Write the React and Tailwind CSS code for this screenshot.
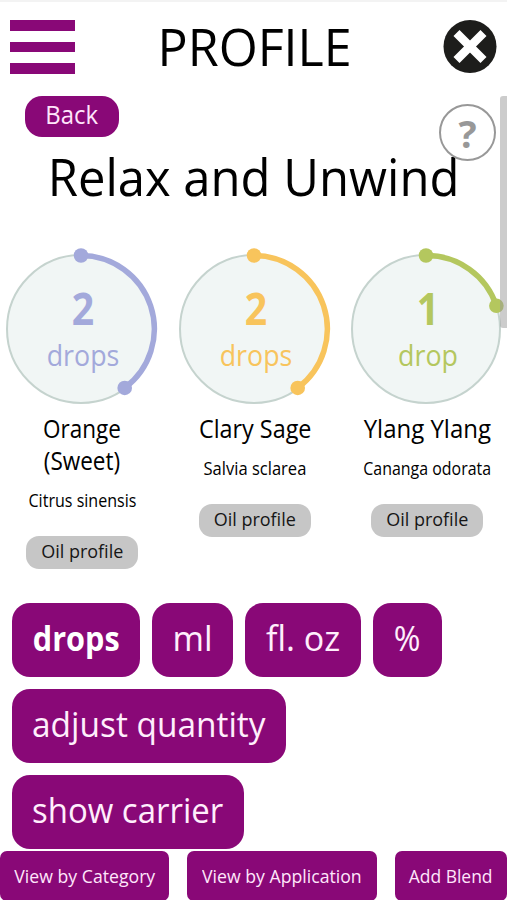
import React, { useState } from "react";

const oils = [
  {
    name: "Orange (Sweet)",
    latin: "Citrus sinensis",
    amount: 2,
    color: "#a3a9db",
    nameStyle: "w-[100px] scale-x-90",
    latinStyle: "scale-x-[0.893]",
  },
  {
    name: "Clary Sage",
    latin: "Salvia sclarea",
    amount: 2,
    color: "#f8c45c",
    nameStyle: "scale-x-[0.935]",
    latinStyle: "scale-x-[0.92]",
  },
  {
    name: "Ylang Ylang",
    latin: "Cananga odorata",
    amount: 1,
    color: "#b4c75e",
    nameStyle: "scale-x-[0.96]",
    latinStyle: "scale-x-[0.885]",
  },
];

const totalDrops = 5;

const Dial = ({ amount, color }) => {
  // the arc starts at the top and runs clockwise
  const angle = (amount / totalDrops) * 2 * Math.PI;
  const x = 75.5 + 73.5 * Math.sin(angle);
  const y = 80.5 - 73.5 * Math.cos(angle);

  return (
    <svg width="160" height="164" viewBox="-5 0 160 164">
      <circle cx="75" cy="81" r="74" fill="#f1f6f5" stroke="#c5d3ce" strokeWidth="2" />
      <path
        d={`M75 7.5 A73.5 73.5 0 0 1 ${x} ${y}`}
        fill="none"
        stroke={color}
        strokeWidth="5.5"
      />
      <circle cx="75" cy="7.5" r="7.3" fill={color} />
      <circle cx={x} cy={y} r="7.3" fill={color} />
      <g transform="translate(77 0) scale(0.87 1)">
        <text y="77.5" textAnchor="middle" fill={color} fontSize="45" fontWeight="700">
          {amount}
        </text>
      </g>
      <g transform="translate(77 0) scale(0.925 1)">
        <text y="118" textAnchor="middle" fill={color} fontSize="29">
          {amount === 1 ? "drop" : "drops"}
        </text>
      </g>
    </svg>
  );
};

const Oil = ({ oil }) => {
  return (
    <div className="flex w-[172.5px] shrink-0 flex-col items-center text-center text-black">
      <div className="-ml-[2px]">
        <Dial amount={oil.amount} color={oil.color} />
      </div>
      <h2 className={"text-[25px] leading-[32px] " + oil.nameStyle}>{oil.name}</h2>
      <p className={"mt-[11px] text-[18px] leading-[26px] " + oil.latinStyle}>{oil.latin}</p>
      <button className="mt-[22.5px] h-[33px] w-[112px] rounded-[13px] bg-[#c6c6c6] pb-[3px] text-[18px] leading-[28px] text-[#161616]">
        Oil profile
      </button>
    </div>
  );
};

const units = [
  { label: "drops", style: "w-[128px]", textStyle: "scale-x-90" },
  { label: "ml", style: "w-[81px]", textStyle: "" },
  { label: "fl. oz", style: "w-[116px]", textStyle: "" },
  { label: "%", style: "w-[69px]", textStyle: "scale-x-95" },
];

const App = () => {
  const [unit, setUnit] = useState("drops");

  return (
    <div className="flex h-[900px] w-[507px] flex-col overflow-hidden border-t-2 border-[#f3f3f3] bg-white font-['Open_Sans','Noto_Sans',sans-serif]">
      <header className="flex h-[94px] shrink-0 items-start justify-between pl-[10px] pr-[10px] pt-[18px]">
        <button className="flex w-[65px] flex-col gap-[11px]">
          <span className="h-[10.5px] w-full bg-[#890877]" />
          <span className="h-[10.5px] w-full bg-[#890877]" />
          <span className="h-[10.5px] w-full bg-[#890877]" />
        </button>
        <h1 className="-mt-[10px] mr-[9px] scale-x-[0.965] text-[52px] leading-[72px]">PROFILE</h1>
        <button>
          <svg width="54" height="54" viewBox="0 0 54 54">
            <circle cx="27" cy="26.5" r="26.5" fill="#1d1d1b" />
            <path d="M13.5 13 40.5 40M40.5 13 13.5 40" stroke="#fff" strokeWidth="8.5" />
          </svg>
        </button>
      </header>

      <main className="relative min-h-0 grow overflow-hidden">
        <button className="ml-[25px] block h-[41px] w-[94px] rounded-[17px] bg-[#890877] pb-[4px] text-[26px] leading-[35px] text-[#ffe6fb]">
          <span className="inline-block scale-x-[0.92]">Back</span>
        </button>
        <h1 className="mt-[3px] whitespace-nowrap text-center text-[52px] leading-[72px]">
          <span className="inline-block scale-x-[0.942]">Relax and Unwind</span>
        </h1>
        <button className="absolute left-[439px] top-[8px] flex h-[57px] w-[57px] items-center justify-center rounded-full border-2 border-[#989898] text-[38px] font-bold leading-none text-[#989898]">
          ?
        </button>

        <section className="-ml-[4px] mt-[36px] flex items-start">
          {oils.map((oil) => (
            <Oil key={oil.name} oil={oil} />
          ))}
        </section>

        <section className="mt-[34px] flex flex-wrap gap-[12px] pl-[12px] text-[34px] leading-[70px] text-[#ffeefc]">
          {units.map((item) => (
            <button
              key={item.label}
              onClick={() => setUnit(item.label)}
              className={
                "h-[74px] rounded-[18px] bg-[#890877] pb-[4px] " +
                item.style +
                (unit === item.label ? " font-bold text-white" : "")
              }
            >
              <span className={"inline-block " + item.textStyle}>{item.label}</span>
            </button>
          ))}
          <div className="w-full">
            <button className="h-[74px] w-[274px] rounded-[18px] bg-[#890877] pb-[4px]">
              <span className="inline-block scale-x-[0.983]">adjust quantity</span>
            </button>
          </div>
          <button className="h-[74px] w-[232px] rounded-[18px] bg-[#890877] pb-[4px]">
            <span className="inline-block scale-x-[0.97]">show carrier</span>
          </button>
        </section>

        {/* scrollbar thumb */}
        <div className="absolute right-0 top-0 h-[232px] w-[7px] rounded-l-[3px] bg-[#999999]/50" />
      </main>

      <footer className="flex h-[49px] shrink-0 justify-between text-[19px] leading-[49px] text-[#ffe6fb]">
        <button className="h-[50px] w-[169px] rounded-[7px] bg-[#890877]">
          <span className="inline-block scale-x-[0.93] whitespace-nowrap">View by Category</span>
        </button>
        <button className="h-[50px] w-[190px] rounded-[7px] bg-[#890877]">
          <span className="inline-block scale-x-[0.93] whitespace-nowrap">View by Application</span>
        </button>
        <button className="h-[50px] w-[112px] rounded-[7px] bg-[#890877]">
          <span className="inline-block scale-x-[0.92] whitespace-nowrap">Add Blend</span>
        </button>
      </footer>
    </div>
  );
};

export default App;
